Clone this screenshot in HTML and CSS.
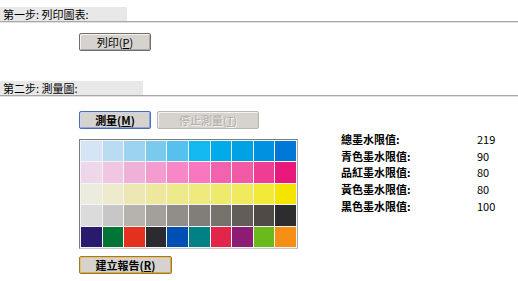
FILE: index.html
```html
<!DOCTYPE html>
<html lang="zh-Hant">
<head>
  <meta charset="UTF-8">
  <title>測量圖</title>
  <link rel="stylesheet" href="styles.css">
</head>
<body>

  <!-- Step 1 -->
  <div class="step step-one">
    <div class="step-title">第一步: 列印圖表:</div>
    <div class="rule"></div>
  </div>
  <div class="button-row first-row">
    <button class="btn btn-print">列印(<u>P</u>)</button>
  </div>

  <!-- Step 2 -->
  <div class="step step-two">
    <div class="step-title wide">第二步: 測量圖:</div>
    <div class="rule"></div>
  </div>
  <div class="button-row second-row">
    <button class="btn btn-measure btn-focus">測量(<u>M</u>)</button>
    <button class="btn btn-stop" disabled>停止測量(<u>T</u>)</button>
  </div>

  <div class="measure-area">
    <div class="chart" id="chart"></div>

    <div class="limits">
      <div class="limit-row"><span class="limit-label">總墨水限值:</span><span class="limit-value">219</span></div>
      <div class="limit-row"><span class="limit-label">青色墨水限值:</span><span class="limit-value">90</span></div>
      <div class="limit-row"><span class="limit-label">品紅墨水限值:</span><span class="limit-value">80</span></div>
      <div class="limit-row"><span class="limit-label">黃色墨水限值:</span><span class="limit-value">80</span></div>
      <div class="limit-row"><span class="limit-label">黑色墨水限值:</span><span class="limit-value">100</span></div>
    </div>
  </div>

  <div class="button-row report-row">
    <button class="btn btn-report">建立報告(<u>R</u>)</button>
  </div>

  <script>
    // patch colours, row by row (cyan, magenta, yellow, grey, solids)
    const patches = [
      ['#d5e5f6', '#b9dcf3', '#9cd3f1', '#7acaee', '#56c0ee', '#13b8f0', '#00abe9', '#00a2e6', '#0092e1', '#0078d7'],
      ['#eed7ea', '#f1c6e3', '#f0b1d9', '#f39ccf', '#f787c6', '#f877bf', '#f262ae', '#f25aa6', '#ee3d92', '#e8197a'],
      ['#ececde', '#eceacb', '#ede8b3', '#ede89d', '#eee98a', '#eeea7e', '#eeea6c', '#f0ea5e', '#f2e939', '#f4e400'],
      ['#dbdbdb', '#c8c7c6', '#b6b3af', '#a3a09c', '#918e89', '#817e79', '#75716b', '#625e57', '#4f4a45', '#2d2c2e'],
      ['#2a1a6e', '#007535', '#e4301e', '#2b2a2e', '#0050b4', '#008186', '#e2264b', '#8c1c74', '#6bba1c', '#f68e13']
    ];

    const chart = document.getElementById('chart');
    patches.forEach(row => {
      row.forEach(color => {
        const cell = document.createElement('div');
        cell.className = 'patch';
        cell.style.background = color;
        chart.appendChild(cell);
      });
    });
  </script>
</body>
</html>
```

FILE: styles.css
```css
body {
  margin: 0;
  font-family: "Noto Sans CJK TC", "Liberation Sans", sans-serif;
  font-size: 11px;
  color: #000;
  background-color: #fff;
}

.step {
  padding-top: 7px;
}
.step-two {
  padding-top: 30px;
}
.step-title {
  width: 124px;
  height: 14px;
  line-height: 14px;
  padding-left: 3px;
  background-color: #e8e8e8; /* light grey label box */
  white-space: nowrap;
}
.step-title.wide {
  width: 140px;
}
.rule {
  height: 0;
  border-top: 1px solid #a8a8a8;
  border-bottom: 1px solid #e2e2e2;
}

.button-row {
  display: flex;
  gap: 6px;
  padding-left: 79px;
}
.first-row {
  padding-top: 10px;
}
.second-row {
  padding-top: 14px;
}
.report-row {
  padding-top: 7px;
}

.btn {
  height: 18px;
  padding: 0;
  font-family: inherit;
  font-size: 11px;
  line-height: 14px;
  color: #000;
  background-color: #d6d3ce; /* classic dialog grey */
  border: 1px solid #6e6e6e;
  border-radius: 2px;
  box-shadow: inset 1px 1px #f4f3f0, inset -1px -1px #aeaaa2;
  cursor: pointer;
}
.btn u {
  text-underline-offset: 1px;
}
.btn-print,
.btn-measure {
  width: 72px;
}
.btn-measure {
  font-weight: bold;
}
.btn-focus {
  border-color: #4c6cb8; /* focused blue edge */
  box-shadow: inset 1px 1px #c8d6f2, inset -1px -1px #8fa6d8;
}
.btn-stop {
  width: 102px;
  color: #aeaba4;
  border-color: #b9b6b0;
  box-shadow: inset 1px 1px #f4f3f0;
  text-shadow: 1px 1px #f6f5f2;
  cursor: default;
}
.btn-report {
  width: 93px;
  font-weight: bold;
  border-color: #9a7a3a;
  box-shadow: inset 1px 1px #f0c060, inset -1px -1px #e0a838; /* gold hover edge */
}

.measure-area {
  display: flex;
  align-items: flex-start;
  padding-top: 10px;
  padding-left: 79px;
}

.chart {
  display: grid;
  grid-template-columns: repeat(10, 1fr);
  grid-template-rows: repeat(5, 1fr);
  gap: 1px;
  width: 215px;
  height: 106px;
  padding: 1px;
  background-color: #f4f4f4;
  border-top: 1px solid #7c7c7c;
  border-left: 1px solid #7c7c7c;
  border-right: 1px solid #a8a8a8;
  border-bottom: 1px solid #c8c8c8;
}
.patch {
  min-width: 0;
}

.limits {
  margin-left: 43px;
  margin-top: -8px;
}
.limit-row {
  display: flex;
  height: 16.7px;
  line-height: 16.7px;
}
.limit-label {
  width: 136px;
  font-weight: bold;
}
.limit-value {
  white-space: nowrap;
}
```
